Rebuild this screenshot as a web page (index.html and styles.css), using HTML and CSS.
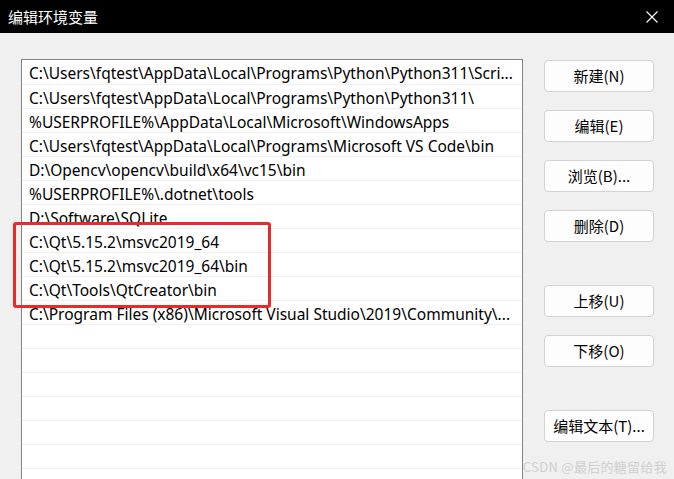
FILE: index.html
```
<!DOCTYPE html>
<html>

<head>
    <meta charset="utf-8" />
    <title>编辑环境变量</title>
    <link rel="stylesheet" href="styles.css">
</head>

<body>
    <div id="win">
        <div class="titlebar">
            <span class="title">编辑环境变量</span>
            <svg class="close" width="12" height="12" viewBox="0 0 12 12">
                <path d="M0.5 0.5 L11.5 11.5 M11.5 0.5 L0.5 11.5" stroke="#fff" stroke-width="1.1" fill="none" />
            </svg>
        </div>
        <div class="main">
            <div class="list">
                <div class="row">C:\Users\fqtest\AppData\Local\Programs\Python\Python311\Scri...</div>
                <div class="row">C:\Users\fqtest\AppData\Local\Programs\Python\Python311\</div>
                <div class="row">%USERPROFILE%\AppData\Local\Microsoft\WindowsApps</div>
                <div class="row">C:\Users\fqtest\AppData\Local\Programs\Microsoft VS Code\bin</div>
                <div class="row">D:\Opencv\opencv\build\x64\vc15\bin</div>
                <div class="row">%USERPROFILE%\.dotnet\tools</div>
                <div class="row">D:\Software\SQLite</div>
                <div class="row">C:\Qt\5.15.2\msvc2019_64</div>
                <div class="row">C:\Qt\5.15.2\msvc2019_64\bin</div>
                <div class="row">C:\Qt\Tools\QtCreator\bin</div>
                <div class="row">C:\Program Files (x86)\Microsoft Visual Studio\2019\Community\...</div>
                <div class="row"></div>
                <div class="row"></div>
                <div class="row"></div>
                <div class="row"></div>
                <div class="row"></div>
                <div class="row"></div>
                <div class="row"></div>
            </div>
            <div class="btns">
                <div class="group">
                    <div class="btn">新建(N)</div>
                    <div class="btn">编辑(E)</div>
                    <div class="btn">浏览(B)...</div>
                    <div class="btn">删除(D)</div>
                </div>
                <div class="group">
                    <div class="btn">上移(U)</div>
                    <div class="btn">下移(O)</div>
                </div>
                <div class="group">
                    <div class="btn">编辑文本(T)...</div>
                </div>
            </div>
        </div>

        <!-- 标注框 -->
        <div class="mark"></div>
        <div class="wm">CSDN @最后的糖留给我</div>
    </div>
</body>

</html>
```

FILE: styles.css
```
body {
    margin: 0;
    padding: 0;
    background: #f0f0f0;
}

#win {
    position: relative;
    width: 674px;
    height: 479px;
    overflow: hidden;
    background: #f0f0f0;
    font-family: "Noto Sans", "Noto Sans CJK SC", sans-serif;
    font-size: 15px;
    color: #000;
}

.titlebar {
    height: 33px;
    background: #000;
    display: flex;
    align-items: center;
    justify-content: space-between;
    padding: 0 16px 0 8px;
}

.title {
    color: #fff;
    font-family: "Noto Sans CJK SC", sans-serif;
    font-size: 15px;
}

.main {
    display: flex;
    padding: 26px 0 0 21px;
}

.list {
    width: 500px;
    height: 440px;
    border: 1px solid #838383;
    background: #fff;
    flex-shrink: 0;
}

.row {
    height: 24px;
    line-height: 24px;
    padding: 1px 0 0 7px;
    box-sizing: border-box;
    border-top: 1px solid #f0f0f0;
    font-size: 15.5px;
    white-space: nowrap;
    overflow: hidden;
}

.row:first-child {
    border-top: none;
}

.btns {
    margin-left: 21px;
    width: 110px;
    display: flex;
    flex-direction: column;
    gap: 43px;
    padding-top: 1px;
}

.group {
    display: flex;
    flex-direction: column;
    gap: 18px;
}

.btn {
    height: 32px;
    box-sizing: border-box;
    border: 1px solid #d3d3d3;
    border-radius: 4px;
    background: #fdfdfd;
    text-align: center;
    line-height: 30px;
    font-family: "Noto Sans CJK SC", sans-serif;
    white-space: nowrap;
}

.mark {
    position: absolute;
    left: 13px;
    top: 222px;
    width: 252px;
    height: 80px;
    border: 3px solid #ea2a2a;
    border-radius: 3px;
}

.wm {
    position: absolute;
    right: 7px;
    top: 457px;
    font-family: "Noto Sans CJK SC", sans-serif;
    font-size: 13px;
    letter-spacing: 0.3px;
    color: #cfcfcf;
    white-space: nowrap;
}
```
